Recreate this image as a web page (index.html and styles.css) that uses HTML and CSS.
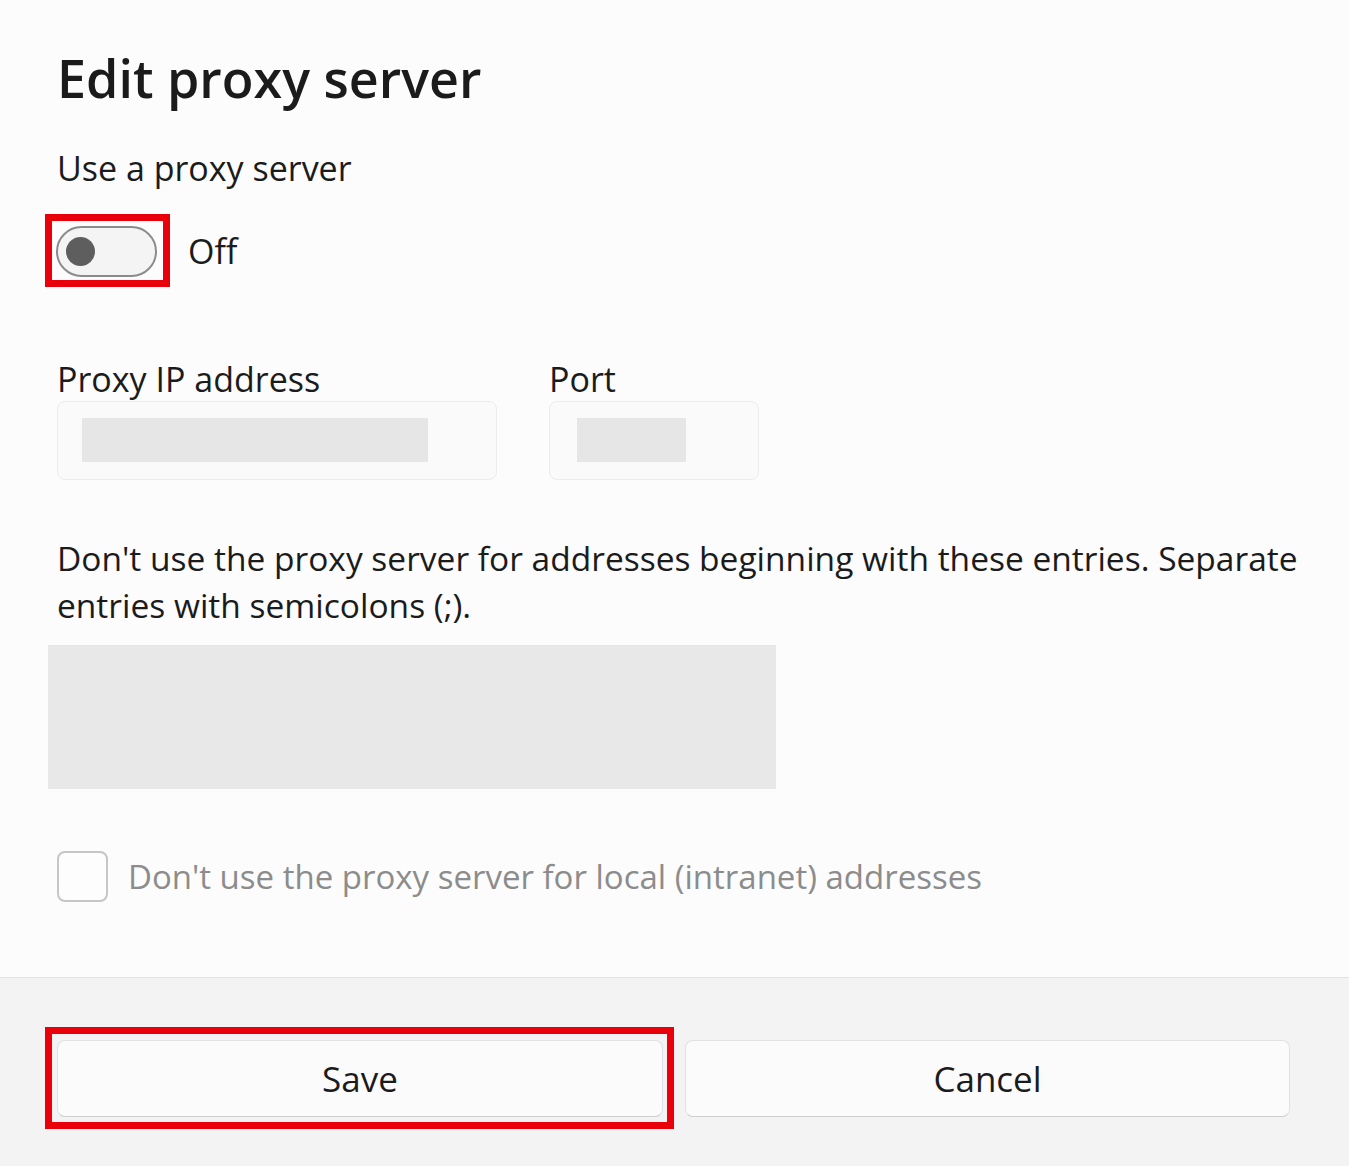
FILE: index.html
```html
<!DOCTYPE html>
<html lang="en">

<head>
    <meta charset="UTF-8">
    <meta name="viewport" content="width=device-width, initial-scale=1.0">
    <title>Edit proxy server</title>
    <link rel="stylesheet" href="styles.css">
</head>

<body>
    <div id='proxy_dialog'>
        <div class='dialog_body'>
            <h1 class='dialog_title'>Edit proxy server</h1>
            <div class='text_line'>Use a proxy server</div>

            <div class='toggle_row'>
                <div class='highlight'>
                    <div class='toggle'><span class='toggle_knob'></span></div>
                </div>
                <span class='text_line toggle_state'>Off</span>
            </div>

            <div class='field_row'>
                <div class='field field_ip'>
                    <div class='text_line'>Proxy IP address</div>
                    <div class='text_box'><span class='redacted redacted_ip'></span></div>
                </div>
                <div class='field field_port'>
                    <div class='text_line'>Port</div>
                    <div class='text_box'><span class='redacted redacted_port'></span></div>
                </div>
            </div>

            <p class='exceptions_note'>Don't use the proxy server for addresses beginning with these entries. Separate entries with semicolons (;).</p>
            <div class='exceptions_box'></div>

            <div class='check_row'>
                <span class='check_box'></span>
                <span class='text_line check_label'>Don't use the proxy server for local (intranet) addresses</span>
            </div>
        </div>

        <div class='dialog_footer'>
            <div class='highlight highlight_button'>
                <div class='dialog_button'>Save</div>
            </div>
            <div class='dialog_button'>Cancel</div>
        </div>
    </div>
</body>

</html>
```

FILE: styles.css
```css
* {
    box-sizing: border-box;
}

body {
    margin: 0;
    background: #fcfcfc;
    font-family: 'Open Sans', 'Noto Sans', sans-serif;
    color: #1b1b1b;
}

#proxy_dialog {
    width: 1349px;
    height: 1166px;
    display: flex;
    flex-direction: column;
}

.dialog_body {
    flex: 1;
    padding: 46px 57px 0;
}

.dialog_title {
    margin: 0;
    font-size: 52px;
    font-weight: 600;
    line-height: 64px;
}

.text_line {
    font-size: 34px;
    line-height: 40px;
}

.dialog_title + .text_line {
    margin-top: 38px;
}

/* red marker boxes round the toggle and the save button */
.highlight {
    border: 7px solid #e8000b;
}

.toggle_row {
    display: flex;
    align-items: center;
    margin-top: 26px;
    margin-left: -12px;
}

.toggle_row .highlight {
    padding: 5px 6px 3px 4px;
}

.toggle {
    width: 101px;
    height: 51px;
    border: 2px solid #8b8b8b;
    border-radius: 26px;
    background: #f4f4f4;
    display: flex;
    align-items: center;
    padding-left: 8px;
}

.toggle_knob {
    width: 29px;
    height: 29px;
    border-radius: 50%;
    background: #5e5e5e;
}

.toggle_state {
    margin-left: 18px;
}

.field_row {
    display: flex;
    gap: 52px;
    margin-top: 72px;
}

.text_box {
    margin-top: 2px;
    height: 79px;
    border: 1px solid #ececec;
    border-radius: 8px;
    background: #fafafa;
    padding: 16px 0 0 24px;
}

.field_ip .text_box {
    width: 440px;
}

.field_port .text_box {
    width: 210px;
    padding-left: 27px;
}

.redacted {
    display: block;
    height: 44px;
    background: #e6e6e6;
}

.redacted_ip {
    width: 346px;
}

.redacted_port {
    width: 109px;
}

.exceptions_note {
    margin: 55px -30px 0 0;
    font-size: 33.5px;
    line-height: 47px;
}

.exceptions_box {
    margin: 16px 0 0 -9px;
    width: 728px;
    height: 144px;
    background: #e8e8e8;
}

.check_row {
    display: flex;
    align-items: center;
    margin-top: 62px;
}

.check_box {
    width: 51px;
    height: 51px;
    border: 2px solid #c6c6c6;
    border-radius: 8px;
    background: #fdfdfd;
}

.check_label {
    margin-left: 20px;
    font-size: 33px;
    color: #8c8c8c;
}

.dialog_footer {
    height: 189px;
    border-top: 1px solid #e3e3e3;
    background: #f3f3f3;
    display: grid;
    grid-template-columns: 606px 605px;
    column-gap: 22px;
    align-items: start;
    padding: 62px 0 0 57px;
}

.highlight_button {
    margin: -13px -11px -12px -12px;
    padding: 6px 4px 5px 5px;
}

.dialog_button {
    height: 77px;
    border: 1px solid #e2e2e2;
    border-bottom-color: #cdcdcd;
    border-radius: 8px;
    background: #fbfbfb;
    display: flex;
    align-items: center;
    justify-content: center;
    font-size: 35px;
}
```
